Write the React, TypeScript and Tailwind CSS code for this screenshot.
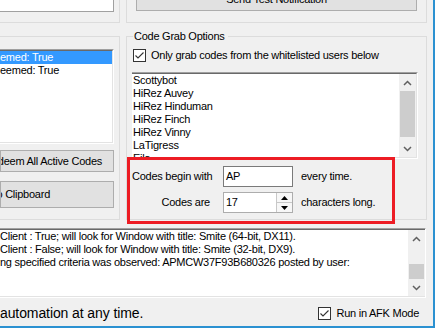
import type { ReactNode } from 'react'

function Chevron({ up }: { up?: boolean }) {
  return (
    <svg width="9" height="6" viewBox="0 0 9 6" aria-hidden>
      <path d={up ? 'M1 5 L4.5 1.5 L8 5' : 'M1 1 L4.5 4.5 L8 1'} stroke="#606060" strokeWidth="1.5" fill="none" />
    </svg>
  )
}

function Checkbox() {
  return (
    <svg width="13" height="13" viewBox="0 0 13 13" aria-hidden className="shrink-0">
      <rect x="0.5" y="0.5" width="12" height="12" fill="#fff" stroke="#333" />
      <path d="M2.5 6.5 L5 9 L10.5 3.5" stroke="#333" strokeWidth="1.1" fill="none" />
    </svg>
  )
}

function ScrollBar({ thumbTop, thumbHeight }: { thumbTop: number; thumbHeight: number }) {
  return (
    <div className="flex w-[17px] shrink-0 flex-col bg-[#f0f0f0]">
      <div className="flex h-[17px] items-center justify-center">
        <Chevron up />
      </div>
      <div className="flex-1">
        <div className="bg-[#cdcdcd] mx-px" style={{ marginTop: thumbTop, height: thumbHeight }} />
      </div>
      <div className="flex h-[17px] items-center justify-center">
        <Chevron />
      </div>
    </div>
  )
}

function Sunken({ className, children }: { className?: string; children: ReactNode }) {
  return (
    <div className={`border-t border-r border-b border-t-[#a0a0a0] border-r-white border-b-white ${className ?? ''}`}>
      <div className="flex h-full border-t border-r border-b border-t-[#696969] border-r-[#e3e3e3] border-b-[#e3e3e3] bg-white">
        {children}
      </div>
    </div>
  )
}

const whitelist = ['Scottybot', 'HiRez Auvey', 'HiRez Hinduman', 'HiRez Finch', 'HiRez Vinny', 'LaTigress', 'Eila']

const log = [
  'Client : True; will look for Window with title: Smite (64-bit, DX11).',
  'Client : False; will look for Window with title: Smite (32-bit, DX9).',
  'ng specified criteria was observed: APMCW37F93B680326 posted by user:',
]

export default function App() {
  return (
    <div className="relative flex h-[328px] w-[435px] flex-col overflow-hidden border-r-2 border-b-2 border-[#2b91d1] bg-[#f0f0f0] font-['Liberation_Sans',Arial,sans-serif] text-[11px] leading-[13px] tracking-[-0.25px] text-black">
      {/* top row */}
      <div className="flex h-[23px] shrink-0">
        <div className="h-[23px] w-[120px] border-r border-b border-[#dcdcdc]">
          <div className="h-[12px] w-[114px] border-r border-b border-[#a0a0a0] bg-white" />
        </div>
        <div className="ml-[6px] flex h-[23px] w-[301px] border-x border-b border-[#dcdcdc] pl-[9px]">
          <button
            type="button"
            className="-mt-[12px] flex h-[23px] w-[281px] items-center justify-center border border-[#adadad] bg-[#e1e1e1]"
          >
            Send Test Notification
          </button>
        </div>
      </div>

      {/* middle row */}
      <div className="mt-[13px] flex h-[184px] shrink-0">
        <div className="flex h-[184px] w-[120px] flex-col border-t border-r border-b border-[#dcdcdc]">
          <Sunken className="mt-[12px] h-[95px] w-[114px]">
            <div className="flex w-full flex-col whitespace-nowrap">
              <div className="h-[13px] bg-[#3399ff] text-white">emed: True</div>
              <div className="h-[13px]">eemed: True</div>
            </div>
          </Sunken>
          <button
            type="button"
            className="mt-[6px] flex h-[22px] w-[114px] items-center justify-end overflow-hidden whitespace-nowrap border border-[#adadad] bg-[#e1e1e1] pr-[11px]"
          >
            Redeem All Active Codes
          </button>
          <button
            type="button"
            className="mt-[9px] flex h-[27px] w-[114px] items-center justify-end overflow-hidden whitespace-nowrap border border-[#adadad] bg-[#e1e1e1] pr-[63px]"
          >
            Copy Code to Clipboard
          </button>
        </div>

        <div className="relative ml-[6px] flex h-[184px] w-[301px] flex-col border border-[#dcdcdc]">
          <span className="-mt-[7px] ml-[6px] w-fit bg-[#f0f0f0] pl-px pr-[3px]">Code Grab Options</span>
          <label className="mt-[6px] ml-[6px] flex h-[13px] items-center gap-[5px] whitespace-nowrap">
            <Checkbox />
            <span>Only grab codes from the whitelisted users below</span>
          </label>
          <Sunken className="mt-[10px] ml-[5px] h-[87px] w-[286px]">
            <div className="flex-1 overflow-hidden">
              {whitelist.map((name) => (
                <div key={name} className="h-[13px] whitespace-nowrap pl-px">
                  {name}
                </div>
              ))}
            </div>
            <ScrollBar thumbTop={0} thumbHeight={46} />
          </Sunken>
          <div className="mt-[7px] ml-[5px] flex items-center whitespace-nowrap">
            <span className="w-[91px]">Codes begin with</span>
            <div className="flex h-[21px] w-[70px] items-center border border-[#7a7a7a] bg-white pl-[2px]">AP</div>
            <span className="ml-[8px]">every time.</span>
          </div>
          <div className="mt-[5px] ml-[5px] flex items-center whitespace-nowrap">
            <span className="w-[91px] pr-[13px] text-right">Codes are</span>
            <div className="flex h-[21px] w-[70px] items-stretch border border-[#adadad] bg-white">
              <span className="flex flex-1 items-center pl-[2px]">17</span>
              <div className="flex w-[16px] flex-col border-l border-[#c8c8c8] bg-[#f7f7f7]">
                <div className="flex flex-1 items-center justify-center border-b border-[#c8c8c8]">
                  <svg width="7" height="4" viewBox="0 0 7 4" aria-hidden>
                    <path d="M0 4 L3.5 0 L7 4 Z" fill="#000" />
                  </svg>
                </div>
                <div className="flex flex-1 items-center justify-center">
                  <svg width="7" height="4" viewBox="0 0 7 4" aria-hidden>
                    <path d="M0 0 L3.5 4 L7 0 Z" fill="#000" />
                  </svg>
                </div>
              </div>
            </div>
            <span className="ml-[8px]">characters long.</span>
          </div>

          {/* annotation */}
          <div className="pointer-events-none absolute top-[120px] left-0 h-[67px] w-[268px] border-[3px] border-[#ed1c24]" />
        </div>
      </div>

      {/* log */}
      <div className="mt-[8px] flex h-[70px] w-[426px] shrink-0 border-t border-t-[#a0a0a0] border-r border-r-white border-b border-b-white">
        <div className="flex flex-1 border-t border-t-[#696969] border-b border-b-[#e3e3e3] bg-white">
          <div className="flex-1 overflow-hidden whitespace-nowrap">
            {log.map((line) => (
              <div key={line} className="h-[13px]">
                {line}
              </div>
            ))}
          </div>
          <ScrollBar thumbTop={17} thumbHeight={15} />
        </div>
      </div>

      {/* status row */}
      <div className="flex flex-1 items-center justify-between pt-[3px] pr-[14px]">
        <span className="whitespace-nowrap text-[14px] tracking-[-0.1px]">automation at any time.</span>
        <label className="flex items-center gap-[6px] whitespace-nowrap">
          <Checkbox />
          <span>Run in AFK Mode</span>
        </label>
      </div>
    </div>
  )
}
